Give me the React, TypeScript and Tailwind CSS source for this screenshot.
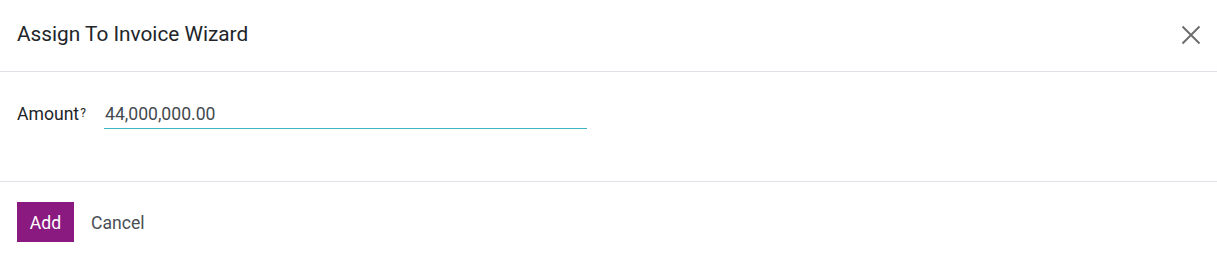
export default function App() {
  return (
    <div className="w-[1217px] h-[261px] bg-white text-[#212529] font-['Roboto',sans-serif]">
      {/* header */}
      <div className="h-[72px] flex items-center justify-between pl-[17px] pr-[14px] border-b border-[#dee2e6]">
        <h4 className="text-[20.8px] leading-none text-[#212529] -mt-[3px]">Assign To Invoice Wizard</h4>
        <button className="w-[24px] h-[24px] flex items-center justify-center -mt-[1px]">
          <svg width="20" height="20" viewBox="0 0 20 20" fill="none">
            <path d="M1.5 1.5 L18.5 18.5 M18.5 1.5 L1.5 18.5" stroke="#6b6b6b" strokeWidth="1.9" />
          </svg>
        </button>
      </div>
      {/* body */}
      <div className="h-[110px] border-b border-[#dee2e6] pl-[17px] pt-[30px]">
        <div className="flex items-start">
          <label className="text-[17.6px] leading-[24px] text-[#212529] w-[87px] whitespace-nowrap">
            Amount<sup className="text-[12px] relative -top-[3px] ml-[1px]">?</sup>
          </label>
          <div className="w-[483px] flex flex-col">
            <span className="block text-[17.6px] leading-[24px] pl-[1px] text-[#444a50]">44,000,000.00</span>
            <div className="h-[1px] mt-[2px] bg-[#3fb5bf]" />
          </div>
        </div>
      </div>
      {/* footer */}
      <div className="flex items-center pl-[17px] pt-[20px] gap-[17px]">
        <button className="h-[40px] w-[57px] bg-[#8b1a80] text-white text-[17.6px] leading-none pt-[3px]">Add</button>
        <button className="text-[17.6px] text-[#4a4f55] leading-none mt-[3px]">Cancel</button>
      </div>
    </div>
  );
}
